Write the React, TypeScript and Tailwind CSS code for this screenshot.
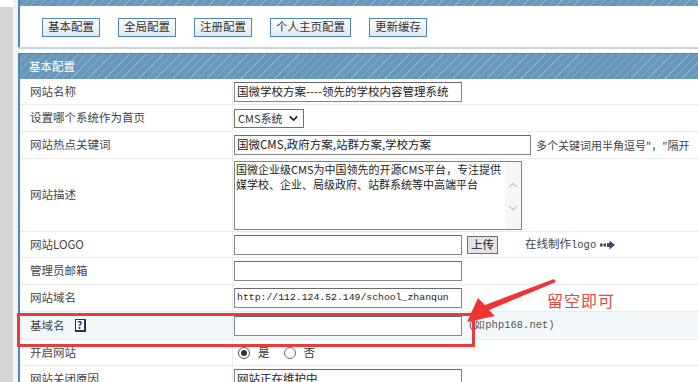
import { ChevronDown, ChevronUp } from "lucide-react";

const stripe =
  "bg-[repeating-linear-gradient(135deg,#6996bb_0px,#6996bb_5px,#86afcf_5px,#86afcf_6px)]";

const font = "font-['SimSun','Noto_Sans_CJK_SC',sans-serif]";

const Row = ({
  label,
  h,
  bg = "bg-white",
  children,
}: {
  label: React.ReactNode;
  h: string;
  bg?: string;
  children?: React.ReactNode;
}) => (
  <div className={`flex shrink-0 border-b border-[#ebebeb] ${h} ${bg}`}>
    <div className="w-[213px] shrink-0 border-r border-[#ebebeb] pl-[10px] flex items-center text-[11.5px] text-[#444]">
      {label}
    </div>
    <div className="flex-1 flex items-center pl-[1px] text-[11.5px] text-[#333] whitespace-nowrap overflow-hidden">
      {children}
    </div>
  </div>
);

const Input = ({ value, w = "w-[228px]", mono }: { value?: string; w?: string; mono?: boolean }) => (
  <div
    className={`${w} shrink-0 h-[20px] border border-[#858585] border-t-[#6a6a6a] bg-white px-[2px] flex items-center overflow-hidden whitespace-nowrap text-[#222] ${
      mono ? "font-['Liberation_Mono',monospace] text-[9.8px]" : "text-[11.5px]"
    }`}
  >
    {value}
  </div>
);

const Btn = ({ label }: { label: string }) => (
  <button className="h-[19px] px-[5px] border border-[#4b86b6] bg-[linear-gradient(#ffffff,#dfe8f3)] text-[11.5px] text-[#333] leading-none">
    {label}
  </button>
);

export default function App() {
  return (
    <div className={`relative w-[698px] h-[382px] overflow-hidden bg-white flex ${font}`}>
      <div className="w-[13px] shrink-0 flex flex-col">
        <div className="h-[7px] bg-white" />
        <div className="flex-1 bg-[#d5d5d5]" />
      </div>
      <div className="w-[5px] shrink-0 bg-[#f1f3f5]" />

      <div className="flex-1 min-w-0">
        {/* toolbar panel */}
        <div className="border-l-2 border-[#4f86b3]">
          <div className={`h-[6px] ${stripe}`} />
          <div className="h-[41px] flex items-center gap-[18px] pl-[22px] pt-[1px]">
            <Btn label="基本配置" />
            <Btn label="全局配置" />
            <Btn label="注册配置" />
            <Btn label="个人主页配置" />
            <Btn label="更新缓存" />
          </div>
        </div>
        <div className="h-[2px] bg-[#c4d5e5]" />
        <div className="h-[4px] bg-white" />

        {/* settings panel */}
        <div className="border-l-2 border-[#4f86b3]">
          <div className={`h-[26px] ${stripe} border-t border-[#4f86b3] flex items-center pl-[9px] text-[11.5px] text-white`}>
            基本配置
          </div>
          <Row label="网站名称" h="h-[26px]">
            <Input value="国微学校方案----领先的学校内容管理系统" />
          </Row>
          <Row label="设置哪个系统作为首页" h="h-[27px]">
            <div className="w-[70px] h-[19px] border border-[#6f6f6f] bg-white flex items-center justify-between px-[3px] text-[11px]">
              <span>CMS系统</span>
              <ChevronDown size={13} strokeWidth={3} className="text-[#222]" />
            </div>
          </Row>
          <Row label="网站热点关键词" h="h-[27px]">
            <Input value="国微CMS,政府方案,站群方案,学校方案" w="w-[297px]" />
            <span className="ml-[5px] text-[#444] text-[11px]">多个关键词用半角逗号"，"隔开</span>
          </Row>
          <Row label="网站描述" h="h-[73px]">
            <div className="w-[288px] h-[69px] border border-[#858585] bg-white flex">
              <div className="flex-1 px-[1px] text-[11px] leading-[15px] text-[#222] overflow-hidden whitespace-nowrap">
                国微企业级CMS为中国领先的开源CMS平台，专注提供
                <br />
                媒学校、企业、局级政府、站群系统等中高端平台
              </div>
              <div className="w-[16px] bg-[#f7f7f7] flex flex-col items-center pt-[16px] gap-[9px] text-[#c6c6c6]">
                <ChevronUp size={14} strokeWidth={2} />
                <ChevronDown size={14} strokeWidth={2} />
              </div>
            </div>
          </Row>
          <Row label="网站LOGO" h="h-[26px]">
            <Input />
            <button className="ml-[5px] h-[18px] px-[3px] border border-[#6d6d6d] bg-[#e4e4e4] text-[11.5px] leading-none text-[#222]">
              上传
            </button>
            <span className="ml-[27px] text-[#444]">
              在线制作<span className="font-['Liberation_Mono',monospace] text-[10.5px]">logo</span>
            </span>
            <svg width="16" height="10" viewBox="0 0 16 10" className="ml-[4px]">
              <rect x="0" y="3.5" width="2.5" height="3" fill="#3c4766" />
              <rect x="3.5" y="3.5" width="2.5" height="3" fill="#3c4766" />
              <rect x="7" y="3" width="3" height="4" fill="#3c4766" />
              <path d="M9.5 0.5 L15 5 L9.5 9.5 Z" fill="#3c4766" />
            </svg>
          </Row>
          <Row label="管理员邮箱" h="h-[27px]">
            <Input />
          </Row>
          <Row label="网站域名" h="h-[27px]">
            <Input value="http://112.124.52.149/school_zhanqun" mono />
          </Row>
          <Row
            label={
              <span className="flex items-center">
                基域名
                <span className="ml-[10px] w-[11px] h-[13px] border border-[#333] border-r-2 border-b-2 bg-white flex items-center justify-center text-[10px] font-bold text-[#1a2fbf] leading-none">
                  ?
                </span>
              </span>
            }
            h="h-[28px]"
            bg="bg-[#f3f8fc]"
          >
            <Input />
            <span className="ml-[6px] font-['Liberation_Mono',monospace] text-[10.5px] text-[#555]">(如php168.net)</span>
          </Row>
          <Row label="开启网站" h="h-[26px]">
            <div className="flex items-center ml-[4px] gap-[8px] text-[#333]">
              <span className="w-[12px] h-[12px] rounded-full border border-[#555] flex items-center justify-center">
                <span className="w-[6px] h-[6px] rounded-full bg-[#333]" />
              </span>
              <span>是</span>
              <span className="ml-[6px] w-[12px] h-[12px] rounded-full border border-[#666]" />
              <span>否</span>
            </div>
          </Row>
          <Row label="网站关闭原因" h="h-[27px]">
            <Input value="网站正在维护中" />
          </Row>
        </div>
      </div>

      {/* annotation */}
      <div className="absolute left-[17px] top-[313px] w-[458px] h-[34px] border-[3px] border-[#e63c3c]" />
      <svg className="absolute left-0 top-0" width="698" height="382" viewBox="0 0 698 382">
        <path d="M556 282 L489 310 L495 316 L467 322 L478 298 L485 305 L554 279 Z" fill="#ee3434" />
      </svg>
      <div className="absolute left-[547px] top-[288px] text-[16px] text-[#e24a4a] font-['Noto_Sans_CJK_SC',sans-serif] tracking-[1px]">
        留空即可
      </div>
    </div>
  );
}
